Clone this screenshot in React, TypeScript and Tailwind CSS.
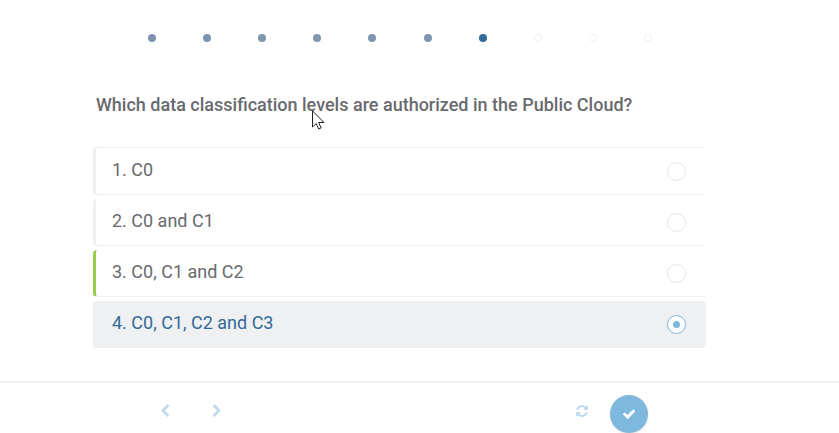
import { useState } from 'react';

const CHEVRON =
  'M1427 301l-531 531 531 531q19 19 19 45t-19 45l-166 166q-19 19-45 19t-45-19l-742-742q-19-19-19-45t19-45l742-742q19-19 45-19t45 19l166 166q19 19 19 45t-19 45z';
const REFRESH =
  'M1511 1056q0 5-1 7-64 268-268 434.500t-478 166.500q-146 0-282.500-55t-243.500-157l-129 129q-19 19-45 19t-45-19-19-45v-448q0-26 19-45t45-19h448q26 0 45 19t19 45-19 45l-137 137q71 66 161 102t187 36q134 0 250-65t186-179q11-17 53-117 8-23 30-23h192q13 0 22.500 9.500t9.500 22.500zm25-800v448q0 26-19 45t-45 19h-448q-26 0-45-19t-19-45 19-45l138-138q-148-137-349-137-134 0-250 65t-186 179q-11 17-53 117-8 23-30 23h-199q-13 0-22.500-9.500t-9.500-22.500v-7q65-268 270-434.500t480-166.500q146 0 284 55.500t245 156.500l130-129q19-19 45-19t45 19 19 45z';
const CHECK =
  'M1671 566q0 40-28 68l-724 724-136 136q-28 28-68 28t-68-28l-136-136-362-362q-28-28-28-68t28-68l136-136q28-28 68-28t68 28l294 295 656-657q28-28 68-28t68 28l136 136q28 28 28 68z';

const steps = ['done', 'done', 'done', 'done', 'done', 'done', 'current', 'todo', 'todo', 'todo'];
const stepStyles: Record<string, string> = {
  done: 'bg-[#7d96ae]',
  current: 'bg-[#336a99]',
  todo: 'border border-[#edf2f3]',
};

const answers = ['1. C0', '2. C0 and C1', '3. C0, C1 and C2', '4. C0, C1, C2 and C3'];
const correctAnswer = 2;

function rowStyle(index: number, selected: boolean) {
  if (selected) return 'rounded-sm border-[#eff0f2] bg-[#eff0f2] text-[#336a99]';
  const edge = index === correctAnswer ? 'border-l-[#9acb4e]' : 'border-l-[#eff0f4]';
  const top = index === 0 ? 'border-t' : '';
  return `rounded-l-sm mr-px border-b-[#eeeff0] border-t-[#eeeff0] text-[#696a6e] ${edge} ${top}`;
}

export default function App() {
  const [choice, setChoice] = useState(3);

  return (
    <div className="overflow-hidden bg-white font-[Roboto,sans-serif]">
      <main className="pr-10">
        <div className="mx-auto max-w-[613px]">
          <ol aria-label="Progress" className="flex justify-between pt-[34px] pr-[54px] pl-[55px]">
            {steps.map((step, i) => (
              <li key={i} className={`size-2 rounded-full ${stepStyles[step]}`} />
            ))}
          </ol>

          <div className="relative mt-[51px] pl-[3px]">
            <h1 id="question" className="text-lg leading-6 font-medium text-[#696a6e]">
              Which data classification levels are authorized in the Public Cloud?
            </h1>
            <svg aria-hidden="true" viewBox="0 0 13 20" className="absolute top-[17px] left-[219px] h-5 w-[13px]">
              <path
                d="M.5 .8V17l3.700-3.500 2.500 5.500 2.400-1.100-2.500-5.400h5.300z"
                fill="#fff"
                stroke="#222"
                strokeLinejoin="round"
              />
            </svg>
          </div>

          <div role="radiogroup" aria-labelledby="question" className="mt-[30px] flex flex-col gap-1">
            {answers.map((answer, i) => (
              <label
                key={answer}
                className={`flex items-center justify-between border-b border-l-[3px] pt-[10px] pb-3 pl-4 ${
                  i === choice ? 'pr-5' : 'pr-[19px]'
                } ${rowStyle(i, i === choice)}`}
              >
                <span className="text-lg leading-6">{answer}</span>
                <input
                  type="radio"
                  name="answer"
                  checked={i === choice}
                  onChange={() => setChoice(i)}
                  className="mt-[3px] grid size-[19px] appearance-none place-items-center rounded-full border border-[#e6e6e7] bg-white checked:border-[#7eb8dc] checked:before:size-[7px] checked:before:rounded-full checked:before:bg-[#7eb8dc]"
                />
              </label>
            ))}
          </div>
        </div>
      </main>

      <footer className="mt-[33px] border-t-2 border-[#f1f1f1]">
        <div className="pr-10">
          <div className="mx-auto flex max-w-[613px] items-center justify-between pt-3 pr-[58px] pl-[65px]">
            <nav aria-label="Questions" className="mb-1.5 flex gap-[38px] text-[#bedaed]">
              <button type="button" aria-label="Previous question">
                <svg viewBox="0 0 1792 1792" fill="currentColor" className="size-[14px]">
                  <path d={CHEVRON} />
                </svg>
              </button>
              <button type="button" aria-label="Next question">
                <svg viewBox="0 0 1792 1792" fill="currentColor" className="size-[14px] -scale-x-100">
                  <path d={CHEVRON} />
                </svg>
              </button>
            </nav>
            <div className="flex items-center gap-[22px]">
              <button type="button" aria-label="Start again" className="mb-1.5 text-[#bedaed]">
                <svg viewBox="0 128 1536 1536" fill="currentColor" className="size-3">
                  <path d={REFRESH} />
                </svg>
              </button>
              <button
                type="button"
                aria-label="Submit answer"
                className="grid size-[38px] place-items-center rounded-full bg-[#7eb8dc] text-white shadow"
              >
                <svg viewBox="0 0 1792 1792" fill="currentColor" className="size-[14px]">
                  <path d={CHECK} />
                </svg>
              </button>
            </div>
          </div>
        </div>
      </footer>
    </div>
  );
}
